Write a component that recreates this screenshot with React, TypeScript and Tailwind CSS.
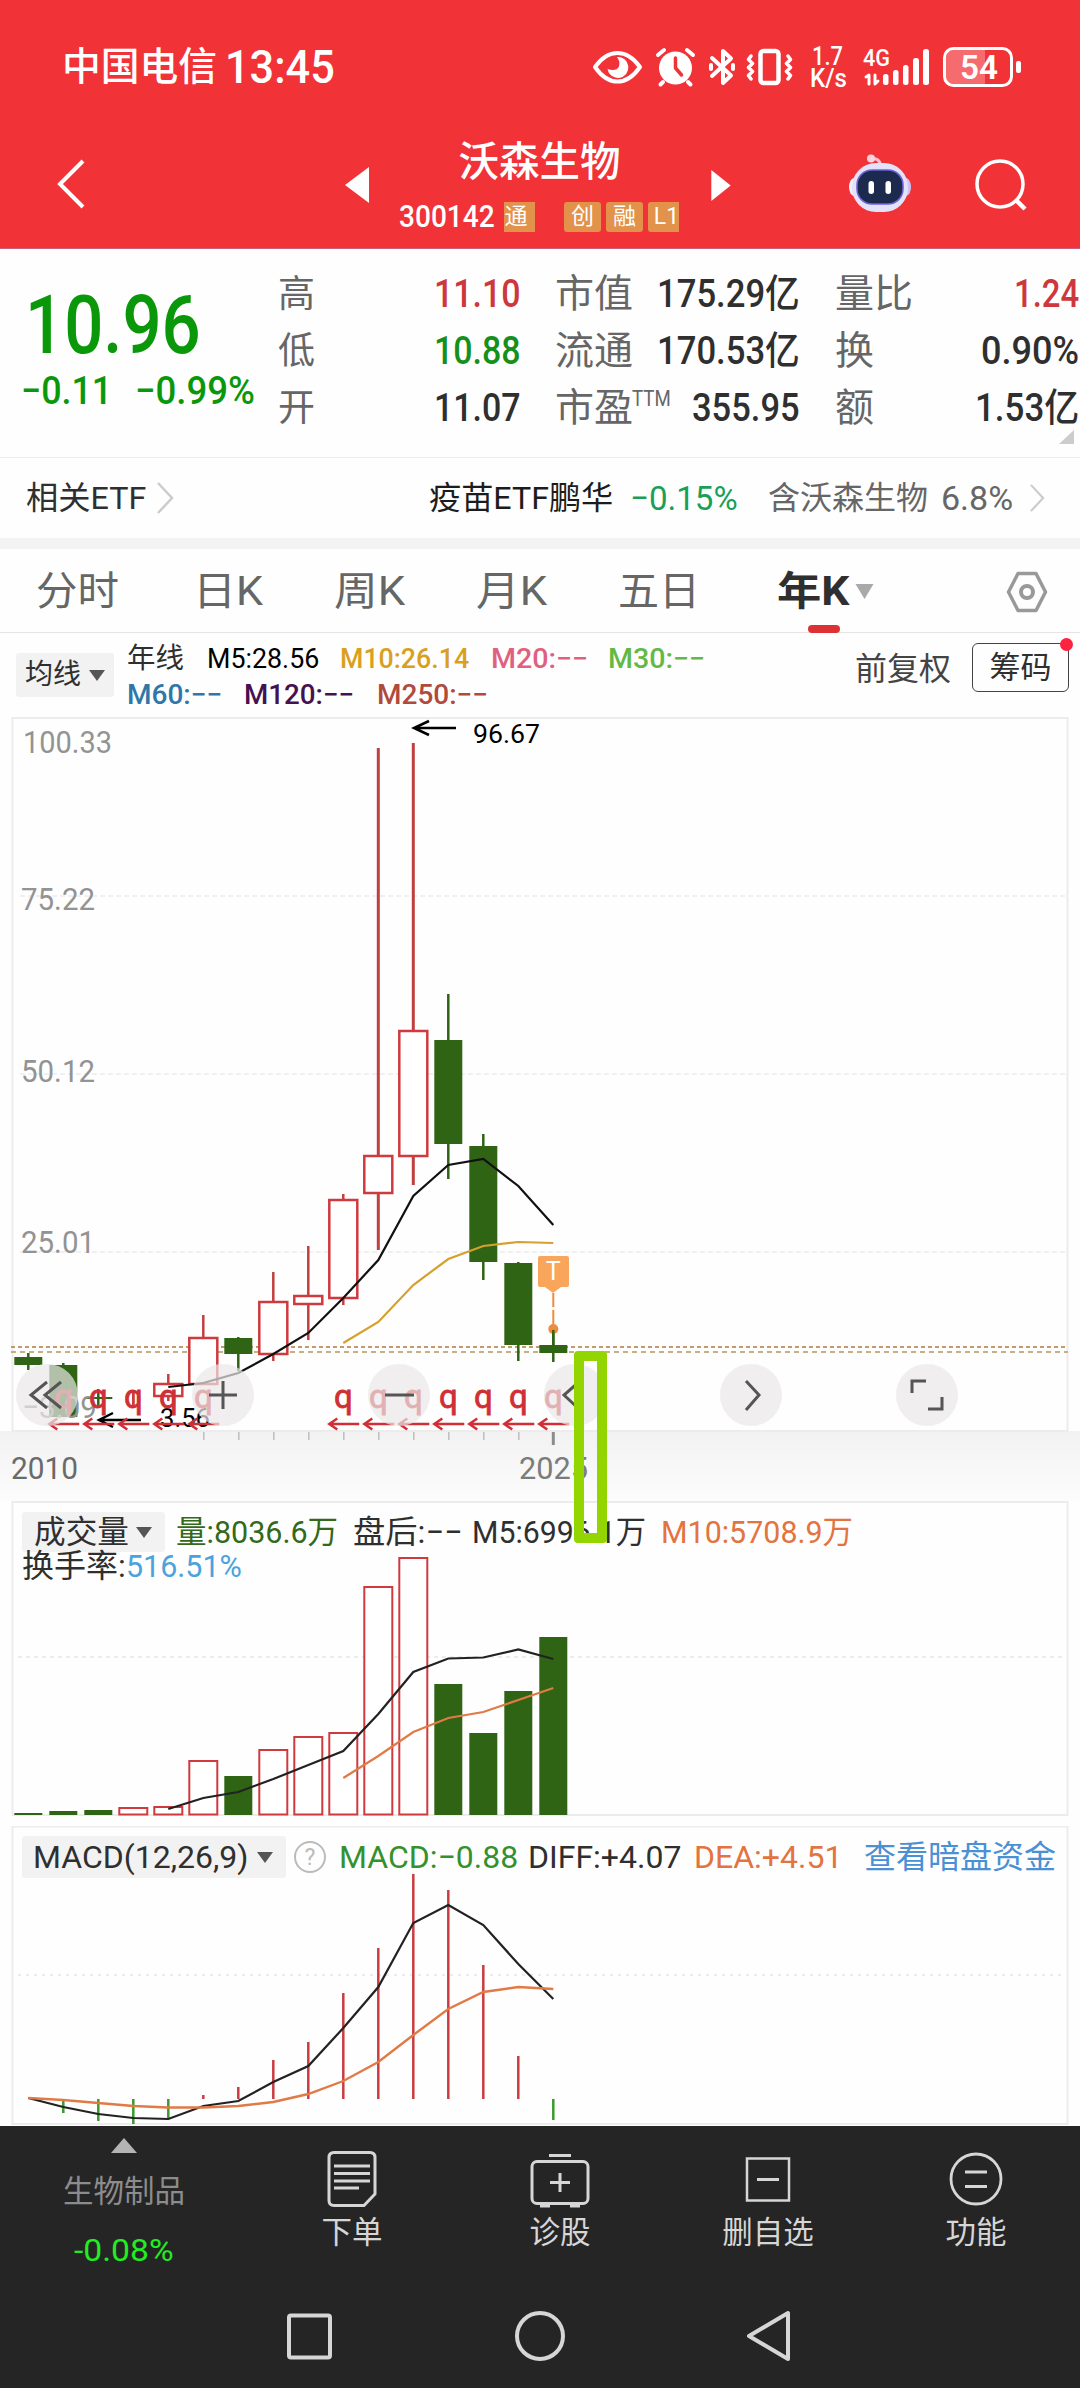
// Stock quote page, yearly K-line view.
//
// Charts use page pixel coordinates (viewBox starts at the panel's own top),
// so every panel shares the same x positions for its candles / bars.

import { useLayoutEffect, useRef, useState } from 'react';
import type { ReactNode } from 'react';

/* ── Data ──────────────────────────────────────────────────────────────── */
const xAt = (i: number) => 28.3 + i * 35;

type Candle = { up: boolean; top: number; bottom: number; high: number; low: number };

const CANDLES: Candle[] = [
  { up: false, top: 1357, bottom: 1365, high: 1353, low: 1370 },
  { up: false, top: 1365, bottom: 1417, high: 1363, low: 1417 },
  { up: false, top: 1397, bottom: 1399, high: 1389, low: 1405 },
  { up: true,  top: 1397, bottom: 1397, high: 1390, low: 1405 },
  { up: true,  top: 1384, bottom: 1396, high: 1374, low: 1401 },
  { up: true,  top: 1338, bottom: 1384, high: 1315, low: 1384 },
  { up: false, top: 1338, bottom: 1354, high: 1337, low: 1371 },
  { up: true,  top: 1302, bottom: 1354, high: 1272, low: 1361 },
  { up: true,  top: 1296, bottom: 1304, high: 1246, low: 1340 },
  { up: true,  top: 1200, bottom: 1298, high: 1194, low: 1305 },
  { up: true,  top: 1156, bottom: 1193, high: 748,  low: 1250 },
  { up: true,  top: 1031, bottom: 1156, high: 743,  low: 1185 },
  { up: false, top: 1040, bottom: 1144, high: 994,  low: 1179 },
  { up: false, top: 1146, bottom: 1262, high: 1134, low: 1280 },
  { up: false, top: 1263, bottom: 1345, high: 1262, low: 1361 },
  { up: false, top: 1345, bottom: 1353, high: 1330, low: 1362 },
];

const MA5  = [1387, 1383, 1373, 1354, 1333, 1298, 1260, 1196, 1165, 1159, 1186, 1225];
const MA10 = [1343, 1322, 1285, 1259, 1246, 1242, 1243];

const VOLUME_TOPS = [1813, 1811, 1810, 1808, 1807, 1761, 1776, 1750, 1737, 1733, 1587, 1558, 1684, 1733, 1691, 1637];
const VOL_MA5  = [1809, 1798, 1792, 1779, 1765, 1751, 1714, 1672, 1658.5, 1657.5, 1649.5, 1659];
const VOL_MA10 = [1778, 1756, 1732, 1718, 1712, 1700, 1688];

const MACD_ENDS = [2099, 2113, 2121, 2124, 2118, 2095, 2087, 2060, 2042, 1993, 1948, 1874, 1890, 1965, 2056, 2120];
const DIFF = [2098, 2107, 2114, 2118, 2119, 2106, 2101, 2082, 2066, 2028, 1987, 1923, 1905, 1925, 1964, 1999];
const DEA  = [2098, 2100, 2103, 2106, 2107.5, 2107.5, 2106, 2102, 2094, 2081, 2062, 2035, 2009, 1992, 1987, 1989];

const DIVIDEND_YEARS = [1, 2, 3, 4, 5, 9, 10, 11, 12, 13, 14, 15];

const RED = '#cf3a3f';
const GREEN = '#2f6414';

function line(values: number[]) {
  const offset = 16 - values.length;
  return values.map((y, i) => `${xAt(i + offset)},${y}`).join(' ');
}

/* ── Text squeezed to the width of its box ─────────────────────────────── */
function Fit({ className, children }: { className: string; children: ReactNode }) {
  const box = useRef<HTMLSpanElement>(null);
  const inner = useRef<HTMLSpanElement>(null);
  const [scale, setScale] = useState(1);

  useLayoutEffect(() => {
    if (box.current && inner.current) {
      setScale(box.current.clientWidth / inner.current.offsetWidth);
    }
  }, []);

  return (
    <span ref={box} className={`block shrink-0 whitespace-nowrap ${className}`}>
      <span ref={inner} className="inline-block origin-left" style={{ transform: `scaleX(${scale})` }}>
        {children}
      </span>
    </span>
  );
}

function Caret({ className = '' }: { className?: string }) {
  return (
    <svg viewBox="0 0 16 11" className={`h-[11px] w-[16px] shrink-0 ${className}`}>
      <path d="M0 0H16L8 11Z" fill="currentColor" />
    </svg>
  );
}

/* ── Status bar + title ────────────────────────────────────────────────── */
function StatusIcons() {
  return (
    <svg viewBox="590 40 435 54" className="h-[54px] w-[435px]" fill="none" stroke="#fff" strokeLinecap="round" strokeLinejoin="round">
      {/* eye comfort */}
      <path d="M595 67Q605 53 617.500 53T640 67Q630 81.500 617.500 81.500T595 67Z" strokeWidth="4" />
      <path d="M617 57a10.500 10.500 0 1 1-9.500 12q8.500 3 11.500-2.500q1.500-5-2-9.500Z" fill="#fff" stroke="none" />
      {/* alarm */}
      <circle cx="675.500" cy="68" r="16.500" fill="#fff" stroke="none" />
      <path d="M658 55l6-5M693 55l-6-5M663 82l-2.500 2.500M688 82l2.500 2.500" strokeWidth="4" />
      <path d="M675.500 58v10l6 7" stroke="#f13237" strokeWidth="3.500" />
      {/* bluetooth */}
      <path d="M712 58l19 17.500-8 7.500V51l8 7.500L712 76" strokeWidth="4" />
      <path d="M711 65v4M733 65v4" strokeWidth="4" />
      {/* vibrate */}
      <rect x="760.500" y="51" width="18" height="32" rx="3" strokeWidth="4.500" />
      <path d="M751 56l-2.500 3.500 4 4-4 4 4 4-4 4 2.500 3.500M788 56l2.500 3.500-4 4 4 4-4 4 4 4-2.500 3.500" strokeWidth="3.500" />
      {/* up/down arrows + signal */}
      <path d="M866 77l3-2v9M875 75v9l3-3" strokeWidth="3" />
      <g fill="#fff" stroke="none">
        <rect x="883" y="74" width="5.500" height="11" rx="2.500" />
        <rect x="893" y="70" width="5.500" height="15" rx="2.500" />
        <rect x="903" y="65" width="5.500" height="20" rx="2.500" />
        <rect x="913" y="58" width="6" height="27" rx="2.500" />
        <rect x="923" y="49" width="6" height="36" rx="2.500" />
      </g>
      {/* battery */}
      <path d="M954 50h31v34h-31q-8 0-8-8V58q0-8 8-8Z" fill="#fff" fillOpacity=".28" stroke="none" />
      <rect x="944.500" y="48.500" width="67" height="37" rx="9" strokeWidth="3" />
      <rect x="1016" y="61" width="5" height="12" rx="2" fill="#fff" stroke="none" />
      <g fill="#fff" stroke="none" fontFamily="Roboto">
        <text x="812" y="65" fontSize="25" fontWeight="500" textLength="31" lengthAdjust="spacingAndGlyphs">1.7</text>
        <text x="810" y="87" fontSize="25" fontWeight="500" textLength="37" lengthAdjust="spacingAndGlyphs">K/s</text>
        <text x="863" y="66" fontSize="23" fontWeight="500" textLength="27" lengthAdjust="spacingAndGlyphs">4G</text>
        <text x="960" y="79" fontSize="34" fontWeight="600" textLength="38" lengthAdjust="spacingAndGlyphs">54</text>
      </g>
    </svg>
  );
}

function Robot() {
  return (
    <svg viewBox="0 0 62 60" className="h-[60px] w-[62px]">
      <path d="M22 6q8-2 10 7" fill="none" stroke="#f7c3d3" strokeWidth="3" />
      <circle cx="22" cy="5.500" r="4" fill="#fbd3de" />
      <ellipse cx="5" cy="34" rx="5" ry="9" fill="#eef0fb" />
      <ellipse cx="57" cy="34" rx="5" ry="9" fill="#c9c4f5" />
      <rect x="3" y="10" width="56" height="49" rx="24" fill="#e3e2f8" />
      <rect x="8" y="17" width="46" height="34" rx="15" fill="#1c2b4d" stroke="#6d62d8" strokeWidth="1.500" />
      <rect x="19.500" y="28" width="5.500" height="13" rx="2.700" fill="#fff" />
      <rect x="36.500" y="28" width="5.500" height="13" rx="2.700" fill="#fff" />
    </svg>
  );
}

function Header() {
  const badge = 'flex h-[30px] items-center justify-center overflow-hidden bg-[#e2924a] text-[23px] leading-[30px]';
  return (
    <header className="h-[249px] border-b border-[#c8607c] bg-[#f13237] text-white">
      <div className="flex h-[134px] items-center pl-[62px] text-[38.5px] font-medium">
        <Fit className="w-[155px]">中国电信</Fit>
        <Fit className="ml-[8px] w-[110px] text-[46px]">13:45</Fit>
        <div className="ml-[255px]"><StatusIcons /></div>
      </div>
      <div className="flex items-start">
        <svg viewBox="0 0 30 50" className="mt-[25px] ml-[56px] h-[50px] w-[30px]">
          <path d="M27 2L4 25L27 48" fill="none" stroke="#fff" strokeWidth="4" />
        </svg>
        <svg viewBox="0 0 24 36" className="mt-[33px] ml-[259px] h-[36px] w-[24px]"><path d="M24 0V36L0 18Z" fill="#fff" /></svg>
        <div className="ml-[30px] w-[281px]">
          <h1 className="h-[56px] text-center text-[40.5px] leading-[56px] font-medium">沃森生物</h1>
          <div className="mt-[12px] flex h-[30px] items-center text-[31px] leading-[30px] font-medium">
            <Fit className="w-[96px]">300142</Fit>
            <div className="flex text-[22px] font-normal">
              <span className={`ml-[9px] w-[31px] ${badge} pr-[7px]`}>通</span>
              <span className={`ml-[29px] w-[37px] rounded-[3px] ${badge}`}>创</span>
              <span className={`ml-[5px] w-[37px] rounded-[3px] ${badge}`}>融</span>
              <span className={`ml-[5px] w-[31px] rounded-l-[3px] pl-[6px] ${badge}`}>L1</span>
            </div>
          </div>
        </div>
        <svg viewBox="0 0 20 32" className="mt-[36px] ml-[31px] h-[31px] w-[20px]"><path d="M0 0V32L20 16Z" fill="#fff" /></svg>
        <div className="mt-[19px] ml-[118px]"><Robot /></div>
        <svg viewBox="0 0 52 54" className="mt-[24px] ml-[64px] h-[54px] w-[52px]" fill="none" stroke="#fff" strokeWidth="3.500">
          <circle cx="25" cy="26" r="23" />
          <path d="M41 42l9 9" strokeWidth="4.500" />
        </svg>
      </div>
    </header>
  );
}

/* ── Quote ─────────────────────────────────────────────────────────────── */
function Quote() {
  return (
    <section className="relative flex h-[209px] border-b border-[#ececec] leading-[57px] text-[#2f2f2f]">
      <div className="w-[278px] pt-[28px] text-[#0a980a]">
        <Fit className="ml-[25px] w-[176px] text-[81px] leading-[98px] font-medium">10.96</Fit>
        <div className="flex text-[39px] leading-[32px] font-medium">
          <Fit className="ml-[21px] w-[91px]">−0.11</Fit>
          <Fit className="ml-[23px] w-[120px]">−0.99%</Fit>
        </div>
      </div>

      <div className="w-[36px] pt-[17px] text-[37px] text-[#666]">
        <p>高</p><p>低</p><p>开</p>
      </div>
      <div className="flex w-[207px] flex-col items-end pt-[17px] text-[39px] font-medium">
        <Fit className="w-[87px] text-[#cd383c]">11.10</Fit>
        <Fit className="w-[87px] text-[#15901a]">10.88</Fit>
        <Fit className="w-[87px]">11.07</Fit>
      </div>

      <div className="ml-[34px] w-[120px] pt-[17px] text-[39px] whitespace-nowrap text-[#666]">
        <p>市值</p>
        <p>流通</p>
        <p className="flex items-start">
          <span className="w-[77px] shrink-0">市盈</span>
          <Fit className="w-[39px] text-[22px] leading-[38px]">TTM</Fit>
        </p>
      </div>
      <div className="flex w-[125px] flex-col items-end pt-[17px] text-[39px] font-medium">
        <Fit className="w-[143px]">175.29亿</Fit>
        <Fit className="w-[143px]">170.53亿</Fit>
        <Fit className="w-[108px]">355.95</Fit>
      </div>

      <div className="ml-[35px] w-[81px] pt-[17px] text-[39px] text-[#666]">
        <p>量比</p><p>换</p><p>额</p>
      </div>
      <div className="flex w-[163px] flex-col items-end pt-[17px] text-[39px] font-medium">
        <Fit className="w-[65px] text-[#cd383c]">1.24</Fit>
        <Fit className="w-[98px]">0.90%</Fit>
        <Fit className="w-[104px]">1.53亿</Fit>
      </div>
      <svg viewBox="0 0 15 14" className="absolute right-[6px] bottom-[13px] h-[14px] w-[15px]"><path d="M15 0V14H0Z" fill="#ccc" /></svg>
    </section>
  );
}

function EtfRow() {
  const chevron = <path d="M2 1L16 16L2 31" fill="none" stroke="#ccc" strokeWidth="2.500" />;
  return (
    <section className="flex h-[91px] items-center border-b-[11px] border-[#f3f3f3] text-[32px] leading-none text-[#2f2f2f]">
      <Fit className="ml-[26px] w-[120px]">相关ETF</Fit>
      <svg viewBox="0 0 18 32" className="ml-[10px] h-[32px] w-[18px]">{chevron}</svg>
      <Fit className="ml-[255px] w-[184px] text-[#1c1c1c]">疫苗ETF鹏华</Fit>
      <Fit className="ml-[17px] w-[108px] text-[34px] text-[#18a058]">−0.15%</Fit>
      <Fit className="ml-[30px] w-[160px] text-[#666]">含沃森生物</Fit>
      <Fit className="ml-[13px] w-[72px] text-[34px] text-[#666]">6.8%</Fit>
      <svg viewBox="0 0 18 32" className="ml-[15px] h-[28px] w-[18px]">{chevron}</svg>
    </section>
  );
}

/* ── Period tabs ───────────────────────────────────────────────────────── */
function Tabs() {
  return (
    <nav className="relative flex h-[84px] items-center border-b border-[#e6e3e4] pt-[2px] text-[40px] leading-none text-[#666]">
      <Fit className="ml-[36px] w-[83px]">分时</Fit>
      <Fit className="ml-[74px] w-[70px]">日K</Fit>
      <Fit className="ml-[71px] w-[71px]">周K</Fit>
      <Fit className="ml-[71px] w-[71px]">月K</Fit>
      <Fit className="ml-[71px] w-[82px]">五日</Fit>
      <Fit className="ml-[77px] w-[72px] font-bold text-[#2f2f2f]">年K</Fit>
      <svg viewBox="0 0 18 15" className="ml-[6px] h-[15px] w-[19px]"><path d="M0 0H18L9 15Z" fill="#a9a9a9" /></svg>
      <svg viewBox="0 0 42 42" className="ml-[132px] h-[42px] w-[42px]" fill="none" stroke="#999" strokeWidth="3.500" strokeLinejoin="round">
        <path d="M12 2.500H30L39.500 21L30 39.500H12L2.500 21Z" />
        <circle cx="21" cy="21" r="6" strokeWidth="4" />
      </svg>
      <span className="absolute bottom-[-1px] left-[808px] h-[8px] w-[32px] rounded-full bg-[#dc3135]" />
    </nav>
  );
}

function MovingAverages() {
  return (
    <section className="flex h-[84px] items-start text-[28px] leading-[36px] text-[#2f2f2f]">
      <div className="mt-[20px] ml-[16px] flex h-[44px] w-[98px] items-center justify-between rounded-[3px] bg-[#f2f2f2] px-[9px]">
        均线<Caret className="text-[#555]" />
      </div>
      <div className="mt-[8px] ml-[13px] w-[600px]">
        <div className="flex">
          <Fit className="w-[57px]">年线</Fit>
          <Fit className="ml-[23px] w-[112px] text-black">M5:28.56</Fit>
          <Fit className="ml-[21px] w-[129px] font-medium text-[#d9a01f]">M10:26.14</Fit>
          <Fit className="ml-[22px] w-[97px] font-medium text-[#e0607f]">M20:−−</Fit>
          <Fit className="ml-[20px] w-[97px] font-medium text-[#62b946]">M30:−−</Fit>
        </div>
        <div className="flex">
          <Fit className="w-[95px] font-medium text-[#2f77a8]">M60:−−</Fit>
          <Fit className="ml-[22px] w-[110px] font-medium text-[#451250]">M120:−−</Fit>
          <Fit className="ml-[23px] w-[111px] font-medium text-[#b04a3c]">M250:−−</Fit>
        </div>
      </div>
      <span className="mt-[18px] ml-[128px] text-[32px] whitespace-nowrap text-[#444]">前复权</span>
      <div className="relative mt-[10px] ml-[21px] flex h-[49px] w-[97px] shrink-0 items-center justify-center rounded-[6px] border-[1.5px] border-[#444] text-[31px]">
        筹码
        <span className="absolute top-[-6px] right-[-5px] size-[13px] rounded-full bg-[#fb2440]" />
      </div>
    </section>
  );
}

/* ── Charts ────────────────────────────────────────────────────────────── */
function AxisText({ x, y, w, size = 32, fill = '#939393', children }: {
  x: number; y: number; w: number; size?: number; fill?: string; children: string;
}) {
  return (
    <text x={x} y={y} fontSize={size} fill={fill} textLength={w} lengthAdjust="spacingAndGlyphs">{children}</text>
  );
}

function KLineChart() {
  return (
    <section className="relative h-[784px]">
      <svg viewBox="0 717 1080 784" className="block h-[784px] w-[1080px]">
        <defs>
          <linearGradient id="axisFade" x1="0" y1="0" x2="0" y2="1">
            <stop offset="0" stopColor="#f1f2f1" />
            <stop offset="1" stopColor="#fcfcfc" />
          </linearGradient>
        </defs>
        <rect x="0" y="1431" width="1080" height="70" fill="url(#axisFade)" />
        <rect x="12.500" y="718" width="1055" height="713" fill="none" stroke="#ececec" strokeWidth="2" />
        {[896, 1074, 1252].map((y) => (
          <path key={y} d={`M20 ${y}H1066`} stroke="#e2e2e2" strokeWidth="1" strokeDasharray="5 3" />
        ))}
        <path d="M11 1347H1068" stroke="#b07a3c" strokeWidth="1.500" strokeDasharray="4 3" />
        <path d="M11 1352H1068" stroke="#b19658" strokeWidth="1.500" strokeDasharray="5 4" />

        <AxisText x={23} y={753} w={89}>100.33</AxisText>
        <AxisText x={21} y={910} w={74}>75.22</AxisText>
        <AxisText x={21} y={1082} w={74}>50.12</AxisText>
        <AxisText x={21} y={1253} w={74}>25.01</AxisText>

        {CANDLES.map((c, i) => {
          const color = c.up ? '#c0403f' : GREEN;
          return (
            <g key={i}>
              <path d={`M${xAt(i)} ${c.high}V${c.top}M${xAt(i)} ${c.bottom}V${c.low}`} stroke={color} strokeWidth={i === 10 || i === 11 ? 3 : 2.5} />
              {c.up ? (
                <rect x={xAt(i) - 14} y={c.top} width="28" height={c.bottom - c.top} fill="#fff" stroke={RED} strokeWidth="2.500" />
              ) : (
                <rect x={xAt(i) - 14} y={c.top} width="28" height={c.bottom - c.top} fill={GREEN} />
              )}
            </g>
          );
        })}
        <path d={`M${xAt(3)} 1390V1405`} stroke={RED} strokeWidth="2.500" />
        <AxisText x={22} y={1418} w={75}>−3.09</AxisText>

        <polyline points={line(MA5)} fill="none" stroke="#111" strokeWidth="2.200" />
        <polyline points={line(MA10)} fill="none" stroke="#d6a02c" strokeWidth="2.200" />

        {/* today's T marker */}
        <rect x="538" y="1256" width="31" height="31" rx="2" fill="#f9a55c" />
        <path d="M545 1287h16l-8 6Z" fill="#f9a55c" />
        <path d="M553.300 1293V1326" stroke="#f08a3c" strokeWidth="2" strokeDasharray="14 3" />
        <circle cx="553.300" cy="1329" r="5" fill="#f08a3c" />
        <path d="M553.300 1330V1346" stroke={GREEN} strokeWidth="2.500" />
        <text x="553.300" y="1280" fontSize="25" fill="#fff" textAnchor="middle">T</text>

        {/* high / low callouts */}
        <g fill="none" stroke="#000" strokeWidth="2.500">
          <path d="M456 728H414M429 721L414 728L429 735" />
          <path d="M141 1420H99M113 1413L99 1420L113 1427" />
        </g>
        <AxisText x={473} y={743} w={67} size={25} fill="#000">96.67</AxisText>
        <AxisText x={160} y={1427} w={50} size={26} fill="#000">3.56</AxisText>

        {DIVIDEND_YEARS.map((i) => (
          <g key={i}>
            <text x={xAt(i)} y="1408" fontSize="33" fill="#d02f36" stroke="#d02f36" strokeWidth=".8" textAnchor="middle">q</text>
            <path d={`M${xAt(i) + 16} 1424H${xAt(i) - 14}M${xAt(i) - 6} 1418.500L${xAt(i) - 14} 1424L${xAt(i) - 6} 1429.500`} fill="none" stroke="#d02f36" strokeWidth="2.500" />
          </g>
        ))}

        {[5, 6, 7, 8, 9, 10, 11, 12, 13, 14].map((i) => (
          <path key={i} d={`M${xAt(i) + 0.5} 1432V1440`} stroke="#bdbdbd" strokeWidth="1.500" />
        ))}
        <path d={`M${xAt(15)} 1432V1445`} stroke="#8c8c8c" strokeWidth="3" />
        <AxisText x={11} y={1479} w={67} size={31} fill="#6a6a6a">2010</AxisText>
        <AxisText x={519} y={1479} w={69} size={31} fill="#7c7c7c">2025</AxisText>
      </svg>

      <div className="absolute top-[647px] left-[16px] flex gap-[114px]">
        <RoundButton><path d="M31 18L15 31L31 44M45 18L29 31L45 44" /></RoundButton>
        <RoundButton><path d="M17 31H45M31 17V45" /></RoundButton>
        <RoundButton><path d="M17 31H46" /></RoundButton>
        <RoundButton><path d="M36 17L20 31L36 46" /></RoundButton>
        <RoundButton><path d="M26 17L39 31L26 46" /></RoundButton>
        <RoundButton><path d="M16 29V17H30M46 33V45H32" /></RoundButton>
      </div>
    </section>
  );
}

function RoundButton({ children }: { children: ReactNode }) {
  return (
    <button className="size-[62px] rounded-full bg-[#e9e7e8]/70">
      <svg viewBox="0 0 62 62" className="size-[62px]" fill="none" stroke="#555" strokeWidth="3">{children}</svg>
    </button>
  );
}

function VolumeChart() {
  return (
    <section className="relative h-[325px]">
      <svg viewBox="0 1501 1080 325" className="absolute inset-0 h-[325px] w-[1080px]">
        <rect x="12.500" y="1502" width="1055" height="313" fill="none" stroke="#ececec" strokeWidth="2" />
        <path d="M18 1657H1066" stroke="#e6e6e6" strokeWidth="1.500" strokeDasharray="4 4" />
        {VOLUME_TOPS.map((y, i) =>
          CANDLES[i].up ? (
            <rect key={i} x={xAt(i) - 14} y={y} width="28" height={1814.5 - y} fill="#fff" stroke={RED} strokeWidth="2" />
          ) : (
            <rect key={i} x={xAt(i) - 14} y={y} width="28" height={1815 - y} fill={GREEN} />
          ),
        )}
        <polyline points={line(VOL_MA5)} fill="none" stroke="#222" strokeWidth="2.200" />
        <polyline points={line(VOL_MA10)} fill="none" stroke="#e07a46" strokeWidth="2.200" />
      </svg>
      <div className="relative flex items-center pt-[11px] text-[32px] leading-[40px] text-[#2f2f2f]">
        <div className="ml-[22px] flex h-[40px] w-[143px] items-center rounded-[3px] bg-[#f2f2f2] pl-[12px]">
          <Fit className="w-[95px]">成交量</Fit>
          <Caret className="ml-[7px] text-[#555]" />
        </div>
        <Fit className="ml-[11px] w-[162px] text-[#33691a]">量:8036.6万</Fit>
        <Fit className="ml-[15px] w-[109px]">盘后:−−</Fit>
        <Fit className="ml-[10px] w-[174px]">M5:6996.1万</Fit>
        <Fit className="ml-[15px] w-[192px] text-[#e2743f]">M10:5708.9万</Fit>
      </div>
      <div className="relative ml-[22px] flex text-[32px] leading-[28px] text-[#2f2f2f]">
        <Fit className="w-[104px]">换手率:</Fit>
        <Fit className="w-[116px] text-[#4aa3dc]">516.51%</Fit>
      </div>
    </section>
  );
}

function MacdChart() {
  return (
    <section className="relative h-[300px]">
      <svg viewBox="0 1826 1080 300" className="absolute inset-0 h-[300px] w-[1080px]">
        <rect x="12.500" y="1826.500" width="1055" height="297.500" fill="none" stroke="#ececec" strokeWidth="2" />
        <path d="M18 1975H1066" stroke="#e6e6e6" strokeWidth="1.500" strokeDasharray="3 5" />
        {MACD_ENDS.map((y, i) => (
          <path key={i} d={`M${xAt(i)} 2099V${y}`} stroke={y > 2099 ? '#3a9a2c' : '#c93c41'} strokeWidth="2.500" />
        ))}
        <polyline points={line(DIFF)} fill="none" stroke="#222" strokeWidth="2.200" />
        <polyline points={line(DEA)} fill="none" stroke="#e07a46" strokeWidth="2.400" />
      </svg>
      <div className="relative flex items-center pt-[10px] text-[32px] leading-[42px] text-[#2f2f2f]">
        <div className="ml-[22px] flex h-[42px] w-[264px] items-center rounded-[3px] bg-[#f2f2f2] pl-[11px]">
          <Fit className="w-[215px]">MACD(12,26,9)</Fit>
          <Caret className="ml-[9px] text-[#555]" />
        </div>
        <svg viewBox="0 0 34 34" className="ml-[7px] h-[34px] w-[34px]">
          <circle cx="17" cy="17" r="15" fill="none" stroke="#bbb" strokeWidth="2" />
          <text x="17" y="25" fontSize="23" fill="#bbb" textAnchor="middle">?</text>
        </svg>
        <Fit className="ml-[12px] w-[179px] text-[#35912b]">MACD:−0.88</Fit>
        <Fit className="ml-[10px] w-[153px]">DIFF:+4.07</Fit>
        <Fit className="ml-[13px] w-[148px] text-[#e2743f]">DEA:+4.51</Fit>
        <Fit className="ml-[22px] w-[192px] text-[#4a90d4]">查看暗盘资金</Fit>
      </div>
    </section>
  );
}

/* ── Bottom navigation ─────────────────────────────────────────────────── */
function NavItem({ label, children }: { label: string; children: ReactNode }) {
  return (
    <button className="flex w-[208px] flex-col items-center pt-[22px] text-[30.5px] leading-[42px] text-[#d6d6d6]">
      <svg viewBox="0 0 64 64" className="h-[64px] w-[64px]" fill="none" stroke="#d6d6d6" strokeWidth="3">{children}</svg>
      {label}
    </button>
  );
}

function BottomBar() {
  return (
    <footer className="h-[262px] bg-[#252525]">
      <div className="flex h-[158px]">
        <div className="flex w-[248px] flex-col items-center pt-[12px] text-[30.5px] leading-[40px] text-[#8c8c8c]">
          <svg viewBox="0 0 26 15" className="h-[15px] w-[26px]"><path d="M13 0L26 15H0Z" fill="#b4b4b4" /></svg>
          <span className="mt-[19px]">生物制品</span>
          <Fit className="mt-[18px] w-[100px] text-[32px] text-[#22ec22]">-0.08%</Fit>
        </div>
        <NavItem label="下单">
          <path d="M14 4.500H50Q55 4.500 55 9.500V46L44 57.500H14Q9 57.500 9 52.500V9.500Q9 4.500 14 4.500Z" />
          <path d="M14 18H50M14 25.500H50M14 33H50M14 40H39" />
        </NavItem>
        <NavItem label="诊股">
          <rect x="4" y="13.500" width="56" height="42" rx="5" />
          <path d="M21 7.500H43M32 25V44M22 34.500H42" />
          <path d="M12 57.500H22M42 57.500H52" strokeWidth="4" />
        </NavItem>
        <NavItem label="删自选">
          <rect x="11" y="10.500" width="42" height="42" strokeWidth="2.500" />
          <path d="M21 31.500H43" />
        </NavItem>
        <NavItem label="功能">
          <circle cx="32" cy="31" r="25" strokeWidth="2.800" />
          <path d="M21 24H43M21 38.500H43" />
        </NavItem>
      </div>
      {/* system keys */}
      <div className="flex items-center pt-[25px]">
        <svg viewBox="0 0 54 54" className="ml-[282px] size-[54px]" fill="none" stroke="#d6d6d6" strokeWidth="4">
          <rect x="7" y="6.500" width="41" height="42" rx="2" />
        </svg>
        <svg viewBox="0 0 54 54" className="ml-[177px] size-[54px]" fill="none" stroke="#d6d6d6" strokeWidth="4">
          <circle cx="27" cy="27" r="23" />
        </svg>
        <svg viewBox="0 0 54 54" className="ml-[175px] size-[54px]" fill="none" stroke="#d6d6d6" strokeWidth="4" strokeLinejoin="round">
          <path d="M46 4V50L7 27Z" />
        </svg>
      </div>
    </footer>
  );
}

export default function App() {
  return (
    <div className="relative h-[2388px] w-[1080px] overflow-hidden bg-[#fefefe] font-[Roboto,'Noto_Sans_CJK_SC',sans-serif]">
      <Header />
      <Quote />
      <EtfRow />
      <Tabs />
      <MovingAverages />
      <KLineChart />
      <VolumeChart />
      <MacdChart />
      <BottomBar />
      {/* hand-drawn highlight over the last column */}
      <div className="absolute top-[1351px] left-[574px] h-[192px] w-[33px] rounded-[4px] border-[10px] border-[#93d500]" />
    </div>
  );
}
